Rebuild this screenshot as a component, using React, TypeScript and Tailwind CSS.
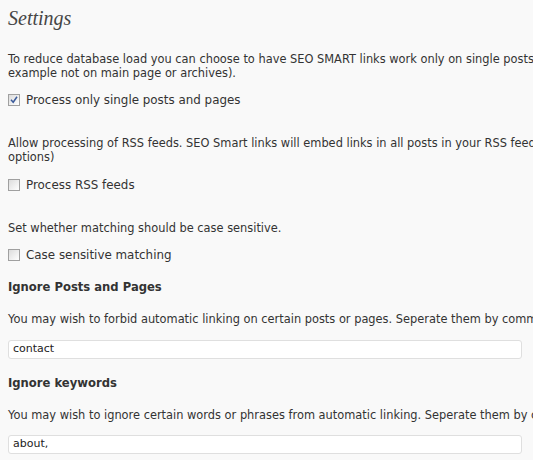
import React from "react";

function Check({ checked }: { checked?: boolean }) {
  return (
    <span className="relative inline-block w-[12px] h-[12px] shrink-0 border border-[#a0a0a0] bg-gradient-to-br from-[#dcdcdc] to-[#ffffff]">
      {checked && (
        <svg viewBox="0 0 10 10" className="absolute left-[0px] top-[0px] w-[10px] h-[10px]">
          <path d="M2 4.8 L4.2 7.3 L8 1.8" fill="none" stroke="#3a5a9a" strokeWidth="1.5" />
        </svg>
      )}
    </span>
  );
}

function CheckRow({ label, checked, className }: { label: string; checked?: boolean; className: string }) {
  return (
    <div className={"flex items-center h-[14px] pl-[8px] gap-[6px] " + className}>
      <Check checked={checked} />
      <span className="text-[11.9px] leading-[14px]">{label}</span>
    </div>
  );
}

export default function App() {
  return (
    <div
      className="w-[533px] h-[460px] overflow-hidden bg-[#f9f9f9] text-[#333] whitespace-nowrap"
      style={{ fontFamily: "'DejaVu Sans', Verdana, sans-serif" }}
    >
      <div className="pl-[8px]">
        <h2
          className="mt-[6px] h-[24px] leading-[24px] text-[20px] italic text-[#464646]"
          style={{ fontFamily: "'Liberation Serif', Georgia, serif" }}
        >
          Settings
        </h2>
        <p className="mt-[22px] text-[11.4px] leading-[14px]">
          To reduce database load you can choose to have SEO SMART links work only on single posts and pages (for
          <br />
          example not on main page or archives).
        </p>
      </div>
      <CheckRow className="mt-[13px]" checked label="Process only single posts and pages" />
      <div className="pl-[8px]">
        <p className="mt-[29px] text-[11.4px] leading-[14px]">
          Allow processing of RSS feeds. SEO Smart links will embed links in all posts in your RSS feed (according to other
          <br />
          options)
        </p>
      </div>
      <CheckRow className="mt-[14px]" label="Process RSS feeds" />
      <div className="pl-[8px]">
        <p className="mt-[29px] text-[11.4px] leading-[14px]">Set whether matching should be case sensitive.</p>
      </div>
      <CheckRow className="mt-[13px]" label="Case sensitive matching" />
      <div className="pl-[8px] pr-[11px]">
        <h4 className="mt-[18px] text-[11.6px] leading-[14px] font-bold">Ignore Posts and Pages</h4>
        <p className="mt-[18px] text-[11.4px] leading-[14px]">
          You may wish to forbid automatic linking on certain posts or pages. Seperate them by commas.
        </p>
        <div className="mt-[14px] h-[19px] rounded-[3px] border border-[#dfdfdf] bg-white flex items-center pl-[4px] text-[11px] text-[#222]">
          contact
        </div>
        <h4 className="mt-[17px] text-[11.6px] leading-[14px] font-bold">Ignore keywords</h4>
        <p className="mt-[18px] text-[11.4px] leading-[14px]">
          You may wish to ignore certain words or phrases from automatic linking. Seperate them by commas.
        </p>
        <div className="mt-[13px] h-[19px] rounded-[3px] border border-[#dfdfdf] bg-white flex items-center pl-[4px] text-[11px] text-[#222]">
          about,
        </div>
      </div>
    </div>
  );
}
